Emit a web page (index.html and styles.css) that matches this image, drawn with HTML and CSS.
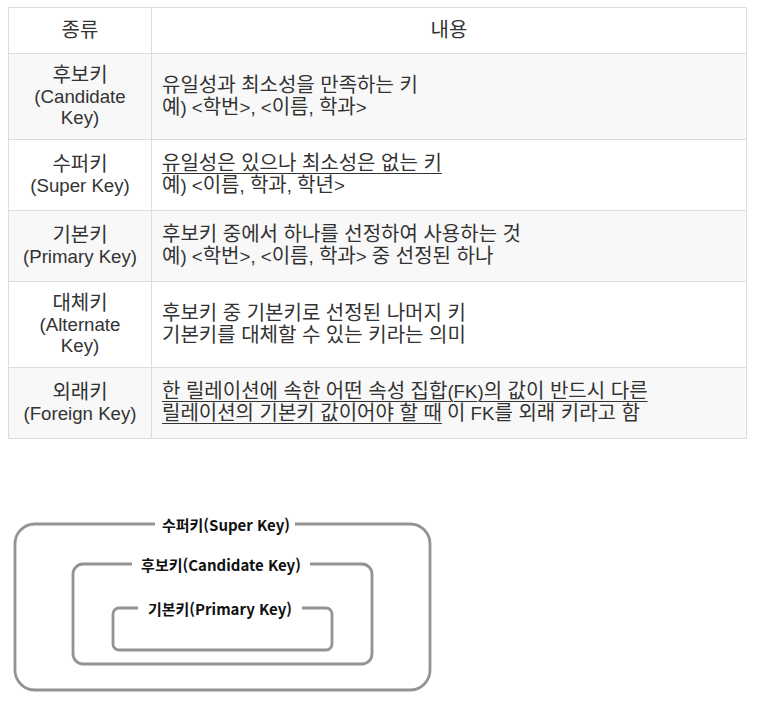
FILE: index.html
```html
<!DOCTYPE html>
<html lang="ko">
<head>
<meta charset="utf-8">
<title>키의 종류</title>
<link rel="stylesheet" href="styles.css">
</head>
<body>
<table class="keys">
  <thead>
    <tr><th class="kind"><span class="ko">종류</span></th><th class="desc-h"><span class="ko">내용</span></th></tr>
  </thead>
  <tbody>
    <tr class="odd">
      <td class="kind"><span class="ko">후보키</span><br>(Candidate Key)</td>
      <td class="desc"><span class="ko">유일성과 최소성을 만족하는 키</span><br><span class="ko">예</span>) &lt;<span class="ko">학번</span>&gt;, &lt;<span class="ko">이름</span>, <span class="ko">학과</span>&gt;</td>
    </tr>
    <tr>
      <td class="kind"><span class="ko">수퍼키</span><br>(Super Key)</td>
      <td class="desc"><span class="u ko">유일성은 있으나 최소성은 없는 키</span><br><span class="ko">예</span>) &lt;<span class="ko">이름</span>, <span class="ko">학과</span>, <span class="ko">학년</span>&gt;</td>
    </tr>
    <tr class="odd">
      <td class="kind"><span class="ko">기본키</span><br>(Primary Key)</td>
      <td class="desc"><span class="ko">후보키 중에서 하나를 선정하여 사용하는 것</span><br><span class="ko">예</span>) &lt;<span class="ko">학번</span>&gt;, &lt;<span class="ko">이름</span>, <span class="ko">학과</span>&gt; <span class="ko">중 선정된 하나</span></td>
    </tr>
    <tr>
      <td class="kind"><span class="ko">대체키</span><br>(Alternate Key)</td>
      <td class="desc"><span class="ko">후보키 중 기본키로 선정된 나머지 키</span><br><span class="ko">기본키를 대체할 수 있는 키라는 의미</span></td>
    </tr>
    <tr class="odd">
      <td class="kind"><span class="ko">외래키</span><br>(Foreign Key)</td>
      <td class="desc"><span class="u"><span class="ko">한 릴레이션에 속한 어떤 속성 집합</span>(FK)<span class="ko">의 값이 반드시 다른</span></span><br><span class="u ko">릴레이션의 기본키 값이어야 할 때</span> <span class="ko">이</span> FK<span class="ko">를 외래 키라고 함</span></td>
    </tr>
  </tbody>
</table>

<figure class="diagram">
  <svg width="430" height="200" viewBox="0 0 430 200" xmlns="http://www.w3.org/2000/svg">
    <g fill="none" stroke="#939393" stroke-width="2.8">
      <rect x="7" y="26" width="415" height="166" rx="20" ry="20"/>
      <rect x="65" y="66" width="299" height="100" rx="10" ry="10"/>
      <rect x="105" y="110" width="219" height="42" rx="6" ry="6"/>
    </g>
    <g fill="#ffffff">
      <rect x="147" y="18" width="140" height="16"/>
      <rect x="124" y="58" width="178" height="16"/>
      <rect x="130" y="102" width="164" height="16"/>
    </g>
    <g class="lbl" text-anchor="middle" dominant-baseline="central">
      <text x="218" y="26">수퍼키(Super Key)</text>
      <text x="213" y="66">후보키(Candidate Key)</text>
      <text x="212" y="110">기본키(Primary Key)</text>
    </g>
  </svg>
</figure>
</body>
</html>
```
FILE: styles.css
```css
body {
  margin: 7px 8px;
  background: #ffffff;
  color: #333333;
  font-family: "Liberation Sans", "Noto Sans CJK KR", sans-serif;
  font-size: 18.67px;
}

.keys {
  width: 739px;
  border-collapse: collapse;
  border: 1px solid #dddddd;
}

.keys th,
.keys td {
  border: 1px solid #dddddd;
  font-weight: normal;
  vertical-align: middle;
}

.keys th {
  padding: 12px 10px;
  line-height: 21px;
  text-align: center;
}

.keys th.kind {
  width: 122px;
}

.keys td.kind {
  padding: 11px 10px;
  line-height: 21px;
  text-align: center;
}

.keys td.desc {
  padding: 13px 10px;
  line-height: 22px;
  text-align: left;
}

.keys tr.odd td {
  background: #f8f8f8;
}

.ko {
  font-size: 20px;
  line-height: 0;
}

.u {
  text-decoration: underline;
  text-decoration-thickness: 1px;
  text-underline-offset: 3px;
}

.diagram {
  margin: 59px 0 0 0;
  width: 430px;
  height: 200px;
}

.diagram svg {
  display: block;
}

.lbl {
  font-family: "Noto Sans CJK KR", "Noto Sans", sans-serif;
  font-weight: 700;
  font-size: 15px;
  fill: #111111;
}
```
